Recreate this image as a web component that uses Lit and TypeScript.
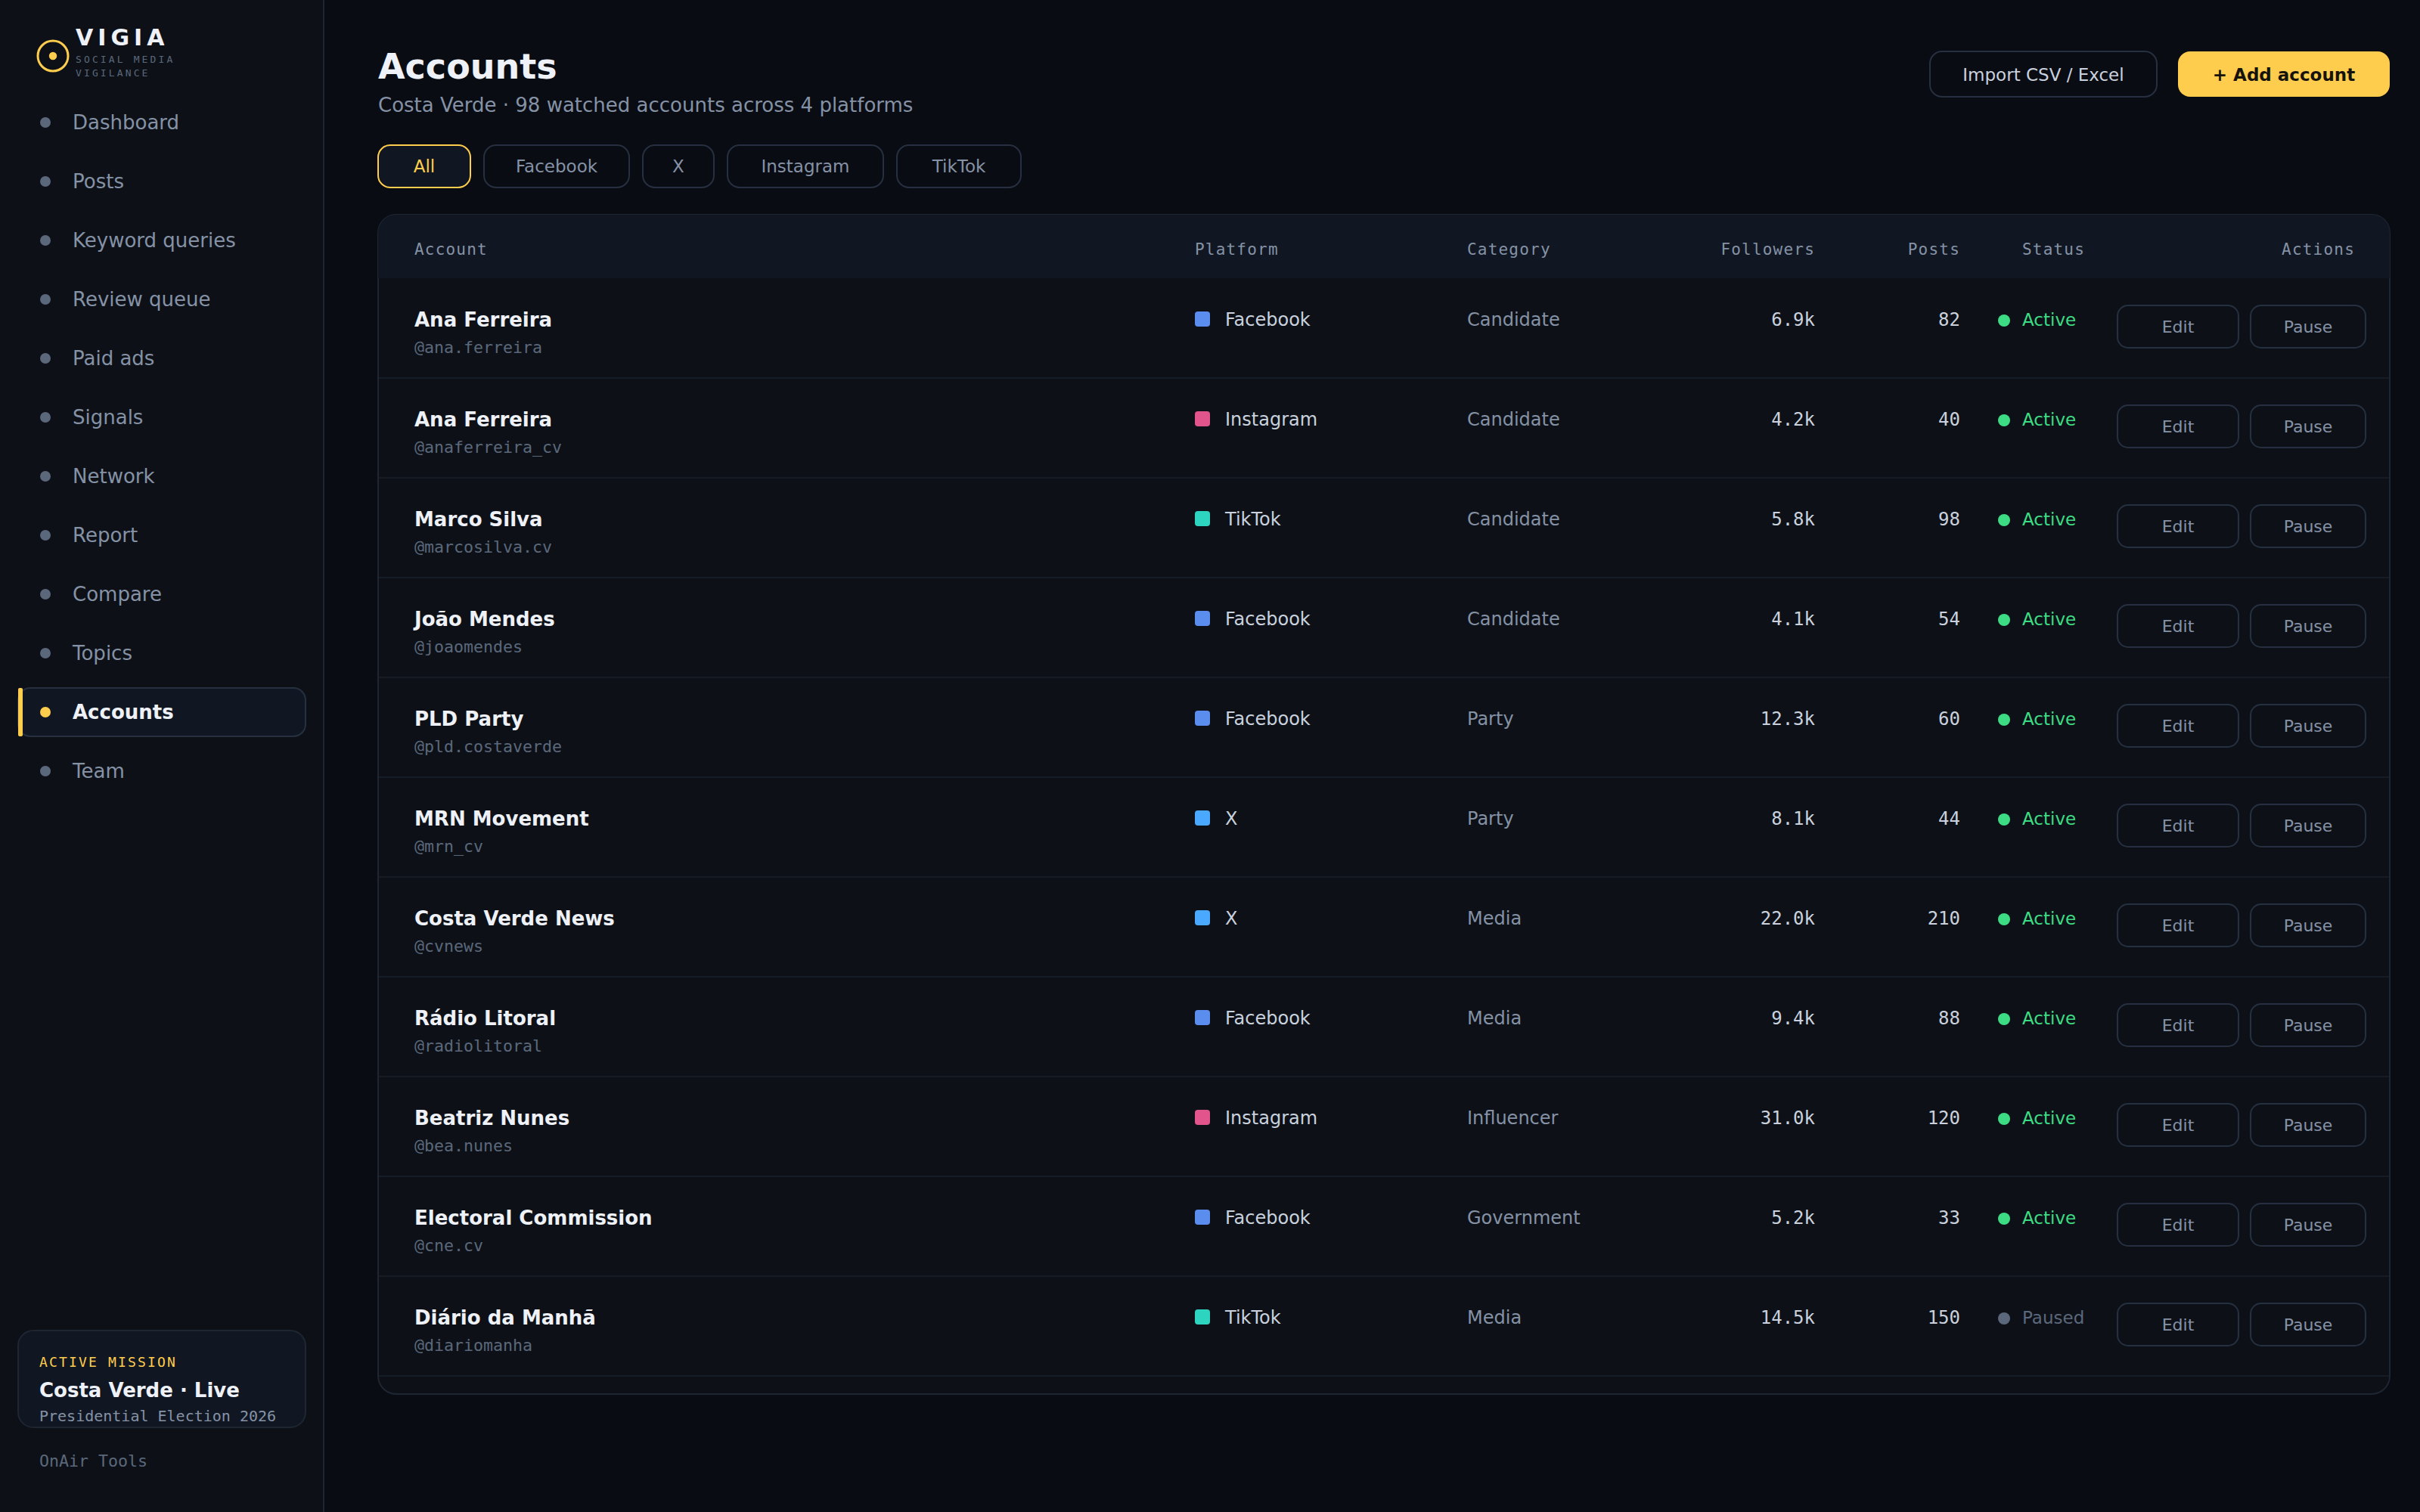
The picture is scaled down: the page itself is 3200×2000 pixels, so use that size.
import { LitElement, html, css } from 'lit';
import { customElement, property, state } from 'lit/decorators.js';
import { classMap } from 'lit/directives/class-map.js';

interface Account {
    name: string;
    handle: string;
    platform: string;
    category: string;
    followers: string;
    posts: number;
    active: boolean;
}

const NAV_ITEMS = [
    'Dashboard', 'Posts', 'Keyword queries', 'Review queue', 'Paid ads', 'Signals',
    'Network', 'Report', 'Compare', 'Topics', 'Accounts', 'Team'
];

const FILTERS = ['All', 'Facebook', 'X', 'Instagram', 'TikTok'];

const ACCOUNTS: Account[] = [
    { name: 'Ana Ferreira', handle: '@ana.ferreira', platform: 'Facebook', category: 'Candidate', followers: '6.9k', posts: 82, active: true },
    { name: 'Ana Ferreira', handle: '@anaferreira_cv', platform: 'Instagram', category: 'Candidate', followers: '4.2k', posts: 40, active: true },
    { name: 'Marco Silva', handle: '@marcosilva.cv', platform: 'TikTok', category: 'Candidate', followers: '5.8k', posts: 98, active: true },
    { name: 'João Mendes', handle: '@joaomendes', platform: 'Facebook', category: 'Candidate', followers: '4.1k', posts: 54, active: true },
    { name: 'PLD Party', handle: '@pld.costaverde', platform: 'Facebook', category: 'Party', followers: '12.3k', posts: 60, active: true },
    { name: 'MRN Movement', handle: '@mrn_cv', platform: 'X', category: 'Party', followers: '8.1k', posts: 44, active: true },
    { name: 'Costa Verde News', handle: '@cvnews', platform: 'X', category: 'Media', followers: '22.0k', posts: 210, active: true },
    { name: 'Rádio Litoral', handle: '@radiolitoral', platform: 'Facebook', category: 'Media', followers: '9.4k', posts: 88, active: true },
    { name: 'Beatriz Nunes', handle: '@bea.nunes', platform: 'Instagram', category: 'Influencer', followers: '31.0k', posts: 120, active: true },
    { name: 'Electoral Commission', handle: '@cne.cv', platform: 'Facebook', category: 'Government', followers: '5.2k', posts: 33, active: true },
    { name: 'Diário da Manhã', handle: '@diariomanha', platform: 'TikTok', category: 'Media', followers: '14.5k', posts: 150, active: false }
];

@customElement('side-bar')
class SideBar extends LitElement {

    @property() current = '';

    static styles = css`
    :host {
        display: flex;
        flex-direction: column;
        box-sizing: border-box;
        width: 429px;
        height: 2000px;
        padding: 34px 22px 0 23px;
        background: #0d1117;
        border-right: 2px solid #1e2632;
        font-family: "DejaVu Sans", sans-serif;
    }
    .brand {
        display: flex;
        height: 95px;
        padding-left: 25px;
    }
    .logo {
        width: 44px;
        height: 44px;
        margin-top: 18px;
    }
    .brand-text {
        margin-left: 8px;
    }
    .brand-name {
        font-size: 30px;
        font-weight: bold;
        line-height: 32px;
        letter-spacing: 6px;
        color: #eef1f7;
    }
    .brand-sub {
        margin-top: 4px;
        font-family: "DejaVu Sans Mono", monospace;
        font-size: 13px;
        line-height: 18px;
        letter-spacing: 3.12px;
        color: #5b687b;
    }
    .nav {
        display: flex;
        flex-direction: column;
        gap: 12px;
    }
    .nav-item {
        position: relative;
        display: flex;
        align-items: center;
        gap: 29px;
        box-sizing: border-box;
        height: 66px;
        padding-left: 28px;
        border: 2px solid transparent;
        border-radius: 17px;
        font-size: 26px;
        line-height: 30px;
        color: #8592a6;
    }
    .nav-item .dot {
        width: 14px;
        height: 14px;
        border-radius: 50%;
        background: #5b687b;
    }
    .nav-item.active {
        background: #111722;
        border-color: #263040;
        font-weight: bold;
        color: #eef1f7;
    }
    .nav-item.active .dot {
        background: #ffcd4d;
    }
    .nav-item.active::before {
        content: "";
        position: absolute;
        left: -1px;
        top: -1px;
        width: 6px;
        height: 64px;
        border-radius: 2px;
        background: #ffcd4d;
    }
    .mission {
        box-sizing: border-box;
        height: 130px;
        margin-top: auto;
        padding: 28px 0 0 27px;
        background: #111722;
        border: 2px solid #1e2632;
        border-radius: 21px;
        white-space: nowrap;
    }
    .mission-label {
        font-family: "DejaVu Sans Mono", monospace;
        font-size: 18px;
        line-height: 26px;
        letter-spacing: 2.16px;
        color: #ffcd4d;
    }
    .mission-name {
        margin-top: 6px;
        font-size: 26px;
        font-weight: bold;
        line-height: 36px;
        color: #eef1f7;
    }
    .mission-sub {
        font-family: "DejaVu Sans Mono", monospace;
        font-size: 20px;
        line-height: 32px;
        color: #8592a6;
    }
    .vendor {
        height: 111px;
        padding: 28px 0 0 29px;
        box-sizing: border-box;
        font-family: "DejaVu Sans Mono", monospace;
        font-size: 21.6px;
        line-height: 32px;
        color: #5b687b;
    }
    `;

    render() {
        return html`
        <div class="brand">
            <svg class="logo" viewBox="0 0 44 44">
                <circle cx="22" cy="22" r="20" fill="none" stroke="#ffcd4d" stroke-width="3"></circle>
                <circle cx="22" cy="22" r="5.2" fill="#ffcd4d"></circle>
            </svg>
            <div class="brand-text">
                <div class="brand-name">VIGIA</div>
                <div class="brand-sub">SOCIAL MEDIA<br>VIGILANCE</div>
            </div>
        </div>
        <nav class="nav">
            ${NAV_ITEMS.map(item => html`
            <div class=${classMap({ 'nav-item': true, active: item === this.current })}>
                <span class="dot"></span>
                <span>${item}</span>
            </div>`)}
        </nav>
        <div class="mission">
            <div class="mission-label">ACTIVE MISSION</div>
            <div class="mission-name">Costa Verde · Live</div>
            <div class="mission-sub">Presidential Election 2026</div>
        </div>
        <div class="vendor">OnAir Tools</div>
        `;
    }
}

@customElement('accounts-table')
class AccountsTable extends LitElement {

    @property({ attribute: false }) accounts: Account[] = [];

    static styles = css`
    :host {
        display: block;
        box-sizing: border-box;
        width: 2662px;
        height: 1562px;
        background: #0d1117;
        border: 2px solid #1e2632;
        border-radius: 25px;
        font-family: "DejaVu Sans", sans-serif;
    }
    .head, .row {
        display: grid;
        grid-template-columns: 1032px 360px 260px 200px 192px 208px 1fr;
        box-sizing: border-box;
    }
    .head {
        height: 84px;
        margin: -1px -1px 1px;
        padding: 31px 46px 0 48px;
        background: #111722;
        border-radius: 24px 24px 0 0;
        font-family: "DejaVu Sans Mono", monospace;
        font-size: 21px;
        line-height: 30px;
        letter-spacing: 1.2px;
        color: #8592a6;
    }
    .row {
        height: 132px;
        padding: 39px 0 0 47px;
        border-bottom: 2px solid #151c26;
        font-size: 24px;
        line-height: 30px;
        color: #c9d1de;
    }
    .name {
        font-size: 26px;
        font-weight: bold;
        color: #eef1f7;
    }
    .handle {
        margin-top: 7px;
        font-family: "DejaVu Sans Mono", monospace;
        font-size: 21.6px;
        color: #5b687b;
    }
    .platform {
        display: flex;
        gap: 20px;
    }
    .swatch {
        width: 20px;
        height: 20px;
        margin-top: 4px;
        border-radius: 4px;
    }
    .facebook { background: #5b8def; }
    .instagram { background: #e1558c; }
    .tiktok { background: #2dd4bf; }
    .x { background: #4aa8ff; }
    .category {
        color: #8592a6;
    }
    .num {
        text-align: right;
    }
    .row .num {
        font-family: "DejaVu Sans Mono", monospace;
    }
    .status {
        display: flex;
        gap: 16px;
        padding-left: 50px;
        font-size: 23px;
        color: #3ddc84;
    }
    .status.paused {
        color: #5b687b;
    }
    .status .dot {
        width: 16px;
        height: 16px;
        margin-top: 8px;
        border-radius: 50%;
        background: currentColor;
    }
    .status-head {
        padding-left: 82px;
    }
    .actions {
        display: flex;
        gap: 14px;
        margin: -5px 0 0 -1px;
    }
    .btn {
        box-sizing: border-box;
        width: 162px;
        height: 58px;
        border: 2px solid #263040;
        border-radius: 15px;
        font-size: 22px;
        line-height: 56px;
        text-align: center;
        color: #8592a6;
    }
    .btn.pause {
        width: 154px;
    }
    `;

    renderRow(a: Account) {
        return html`
        <div class="row">
            <div>
                <div class="name">${a.name}</div>
                <div class="handle">${a.handle}</div>
            </div>
            <div class="platform">
                <span class="swatch ${a.platform.toLowerCase()}"></span>
                <span>${a.platform}</span>
            </div>
            <div class="category">${a.category}</div>
            <div class="num">${a.followers}</div>
            <div class="num">${a.posts}</div>
            <div class=${classMap({ status: true, paused: !a.active })}>
                <span class="dot"></span>
                <span>${a.active ? 'Active' : 'Paused'}</span>
            </div>
            <div class="actions">
                <div class="btn">Edit</div>
                <div class="btn pause">Pause</div>
            </div>
        </div>
        `;
    }

    render() {
        return html`
        <div class="head">
            <div>Account</div>
            <div>Platform</div>
            <div>Category</div>
            <div class="num">Followers</div>
            <div class="num">Posts</div>
            <div class="status-head">Status</div>
            <div class="num">Actions</div>
        </div>
        ${this.accounts.map(a => this.renderRow(a))}
        `;
    }
}

@customElement('app-root')
class AppRoot extends LitElement {

    @state() filter = 'All';

    static styles = css`
    :host {
        display: flex;
        width: 3200px;
        height: 2000px;
        overflow: hidden;
        background: #090c13;
        font-family: "DejaVu Sans", sans-serif;
    }
    .main {
        flex: 1;
        padding: 60px 39px 0 70px;
    }
    .header {
        display: flex;
        justify-content: space-between;
        height: 131px;
    }
    .title {
        margin: 0 0 0 1px;
        font-size: 46px;
        font-weight: bold;
        line-height: 56px;
        color: #eef1f7;
    }
    .subtitle {
        margin: 8px 0 0 1px;
        font-size: 26px;
        line-height: 30px;
        color: #8592a6;
    }
    .buttons {
        display: flex;
        align-items: center;
        gap: 27px;
        height: 62px;
        margin: 7px 1px 0 0;
    }
    .btn {
        box-sizing: border-box;
        width: 302px;
        height: 62px;
        border: 2px solid #263040;
        border-radius: 17px;
        font-size: 23px;
        line-height: 60px;
        text-align: center;
        color: #c9d1de;
    }
    .btn.primary {
        width: 280px;
        height: 60px;
        border: none;
        border-radius: 16px;
        font-weight: bold;
        line-height: 62px;
        background: #ffcd4d;
        color: #15130c;
    }
    .filters {
        display: flex;
        gap: 16px;
        height: 58px;
        margin-bottom: 34px;
    }
    .filter {
        box-sizing: border-box;
        height: 58px;
        padding: 0 38px;
        border: 2px solid #263040;
        border-radius: 17px;
        font-size: 23px;
        line-height: 55px;
        text-align: center;
        color: #8592a6;
    }
    .filter.all { width: 124px; }
    .filter.facebook { width: 194px; }
    .filter.x { width: 96px; }
    .filter.instagram { width: 208px; }
    .filter.tiktok { width: 166px; }
    .filter.active {
        background: #111722;
        border-color: #ffcd4d;
        color: #ffcd4d;
    }
    `;

    render() {
        return html`
        <side-bar current="Accounts"></side-bar>
        <div class="main">
            <div class="header">
                <div>
                    <h1 class="title">Accounts</h1>
                    <div class="subtitle">Costa Verde · 98 watched accounts across 4 platforms</div>
                </div>
                <div class="buttons">
                    <div class="btn">Import CSV / Excel</div>
                    <div class="btn primary">+ Add account</div>
                </div>
            </div>
            <div class="filters">
                ${FILTERS.map(f => html`
                <div class="filter ${f.toLowerCase()} ${f === this.filter ? 'active' : ''}">${f}</div>`)}
            </div>
            <accounts-table .accounts=${ACCOUNTS}></accounts-table>
        </div>
        `;
    }
}
